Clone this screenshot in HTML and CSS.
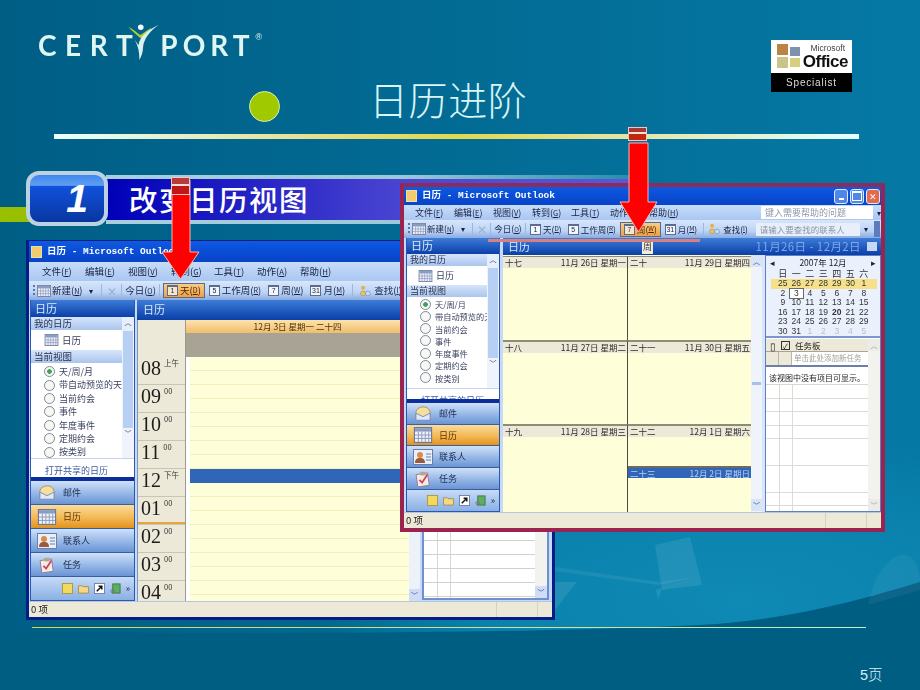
FILE: index.html
```html
<!DOCTYPE html>
<html lang="zh-CN">
<head>
<meta charset="utf-8">
<title>日历进阶</title>
<link rel="stylesheet" href="styles.css">
</head>
<body>
<svg class="sprite" width="0" height="0" aria-hidden="true">
  <symbol id="i-cal" viewBox="0 0 16 14"><rect x=".5" y=".5" width="15" height="13" fill="#eef2fb" stroke="#6a7a9c"/><rect x="1" y="1" width="14" height="3" fill="#8a9cc4"/><path d="M1 7h14M1 10h14M4 4v9M7 4v9M10 4v9M13 4v9" stroke="#8b98b8" stroke-width=".8"/></symbol>
  <symbol id="i-mail" viewBox="0 0 20 18"><path d="M2 7C3 2 8 1 11 1s6 2 7 6v8H2z" fill="#f6df9c" stroke="#a98d4c"/><path d="M2 8l8 4 8-4v8H2z" fill="#dfe8f8" stroke="#7288b4"/></symbol>
  <symbol id="i-contact" viewBox="0 0 20 16"><rect x=".5" y=".5" width="19" height="15" fill="#eaf0fb" stroke="#6c7ea8"/><circle cx="7" cy="6" r="3" fill="#d98c4a"/><path d="M2 14c0-4 2-5 5-5s5 1 5 5z" fill="#a0583a"/><path d="M13 5h5M13 8h5M13 11h5" stroke="#6c7ea8"/></symbol>
  <symbol id="i-task" viewBox="0 0 18 18"><rect x="2" y="3" width="13" height="14" fill="#f5eee0" stroke="#8a7a9c" transform="rotate(-8 9 9)"/><rect x="6" y="1" width="6" height="4" fill="#b0a78e"/><path d="M5 10l3 3 6-9" fill="none" stroke="#d0406a" stroke-width="2"/></symbol>
  <symbol id="i-find" viewBox="0 0 16 14"><circle cx="5" cy="3" r="2.5" fill="#e7b040"/><circle cx="5" cy="10" r="3" fill="#e8c468" stroke="#b08a30" stroke-width=".7"/><circle cx="11" cy="10" r="3" fill="#c5d9f5" stroke="#6a7fb0" stroke-width=".7"/></symbol>
  <symbol id="i-note" viewBox="0 0 12 12"><rect x=".5" y=".5" width="11" height="11" fill="#f4d860" stroke="#a89840"/></symbol>
  <symbol id="i-folder" viewBox="0 0 12 12"><path d="M.5 3h4l1 1h6v7H.5z" fill="#f2d888" stroke="#a88f40"/></symbol>
  <symbol id="i-link" viewBox="0 0 12 12"><rect x=".5" y=".5" width="11" height="11" fill="#fff" stroke="#6a7fb0"/><path d="M3 9l5-5M5 3.5h3.5V7" stroke="#111" stroke-width="1.6" fill="none"/></symbol>
  <symbol id="i-shelf" viewBox="0 0 12 12"><rect x="3" y="1" width="8" height="10" fill="#5dae62" stroke="#3c7a44"/><circle cx="3" cy="9" r="2" fill="none" stroke="#777"/></symbol>
</svg>

<main class="slide">
  <svg class="backdrop" viewBox="0 0 920 690" preserveAspectRatio="none" aria-hidden="true">
    <defs>
      <linearGradient id="sky" x1="0" x2="1" y1="0" y2="0"><stop offset="0" stop-color="#005e85"/><stop offset="1" stop-color="#0579a4"/></linearGradient>
      <radialGradient id="lit" gradientUnits="userSpaceOnUse" cx="740" cy="600" r="420" gradientTransform="translate(0 360) scale(1 .4)"><stop offset="0" stop-color="#0f8ab5"/><stop offset=".6" stop-color="#0a82ad"/><stop offset="1" stop-color="#0a82ad" stop-opacity="0"/></radialGradient>
    </defs>
    <rect width="920" height="690" fill="url(#sky)"/>
    <rect y="440" width="920" height="200" fill="url(#lit)"/>
    <path d="M0 690V632C260 634 500 634 700 625 790 620 860 600 920 582V690z" fill="#005e83"/>
    <path d="M655 545l35-8 12 48-40 5z" fill="#fff" opacity=".09"/>
    <path d="M555 567l105 15 38-5-40 8-104-14z" fill="#fff" opacity=".07"/>
    <path d="M656 590l44-12-38 10-4 12z" fill="#fff" opacity=".09"/>
    <path d="M555 582h22l-22 28z" fill="#fff" opacity=".09"/>
    <path d="M868 605c6-30 22-50 34-50s18 10 18 30v5z" fill="#fff" opacity=".05"/>
  </svg>

  <div class="brand">
    <span class="brand-word">CERT</span>
    <svg class="brand-mark" viewBox="0 0 40 40" aria-hidden="true">
      <path d="M3 4c6 3 10 7 13 9 3-2 8-6 12-8-3 5-8 9-11 12-3-3-10-8-14-13z" fill="#b6cc3a"/>
      <circle cx="16.500" cy="4.500" r="3" fill="#fff"/>
      <path d="M15 40c0-9-1-14-5-22l4 6c1-8 9-16 22-22-10 7-16 15-17 24 0 6-2 10-4 14z" fill="#d9f2ef"/>
    </svg>
    <span class="brand-word brand-port">PORT</span>
    <span class="brand-reg">®</span>
  </div>

  <div class="cert-badge">
    <div class="cert-top">
      <svg class="cert-flag" viewBox="0 0 26 26" aria-hidden="true">
        <rect x="1" y="1" width="11" height="11" fill="#b98445"/><rect x="14" y="4" width="10" height="9" fill="#7f92ad"/>
        <rect x="1" y="14" width="11" height="11" fill="#c9c48a"/><rect x="14" y="15" width="10" height="9" fill="#d8ce80"/>
      </svg>
      <div class="cert-words"><span class="cert-ms">Microsoft</span><span class="cert-of">Office</span></div>
    </div>
    <div class="cert-foot">Specialist</div>
  </div>

  <i class="bullet"></i>
  <h1 class="title">日历进阶</h1>
  <i class="rule"></i>

  <i class="green-stub"></i>
  <div class="band"><span class="band-text">改变日历视图</span></div>
  <div class="step"><span class="step-num">1</span></div>

  <!-- back window: day view -->
  <section class="win win-back">
    <header class="titlebar"><i class="app-ico"></i><span class="app-name">日历 - Microsoft Outlook</span></header>
    <nav class="menu">
      <span>文件(<u>F</u>)</span><span>编辑(<u>E</u>)</span><span>视图(<u>V</u>)</span><span>转到(<u>G</u>)</span><span>工具(<u>T</u>)</span><span>动作(<u>A</u>)</span><span>帮助(<u>H</u>)</span>
    </nav>
    <div class="toolbar">
      <i class="grip"></i>
      <svg class="tb-ico"><use href="#i-cal"/></svg><span class="tb-new">新建(<u>N</u>)</span><span class="tb-drop">▾</span><i class="sep"></i>
      <span class="tb-x">✕</span><i class="sep"></i>
      <span class="tb-today">今日(<u>O</u>)</span><i class="sep"></i>
      <span class="tb-btn on"><b class="dayico">1</b>天(<u>D</u>)</span>
      <span class="tb-btn"><b class="dayico">5</b>工作周(<u>R</u>)</span>
      <span class="tb-btn"><b class="dayico">7</b>周(<u>W</u>)</span>
      <span class="tb-btn"><b class="dayico">31</b>月(<u>M</u>)</span><i class="sep"></i>
      <span class="tb-btn"><svg class="tb-find"><use href="#i-find"/></svg>查找(<u>I</u>)</span>
    </div>
    <div class="body">
      <aside class="pane">
        <div class="pane-head">日历</div>
        <div class="pane-main">
          <div class="pane-list">
            <div class="sec">我的日历</div>
            <div class="cal-item"><svg class="cal-item-ico"><use href="#i-cal"/></svg><span>日历</span></div>
            <div class="sec">当前视图</div>
            <ul class="radios">
              <li class="on">天/周/月</li><li>带自动预览的天</li><li>当前约会</li><li>事件</li><li>年度事件</li><li>定期约会</li><li>按类别</li>
            </ul>
          </div>
          <div class="vscroll"><i class="sb-up">︿</i><i class="sb-thumb"></i><i class="sb-down">﹀</i></div>
        </div>
        <div class="share">打开共享的日历</div>
        <i class="strip"></i>
        <div class="navs">
          <div class="nav"><svg><use href="#i-mail"/></svg>邮件</div>
          <div class="nav on"><svg><use href="#i-cal"/></svg>日历</div>
          <div class="nav"><svg><use href="#i-contact"/></svg>联系人</div>
          <div class="nav"><svg><use href="#i-task"/></svg>任务</div>
          <div class="nav-tray"><svg><use href="#i-note"/></svg><svg><use href="#i-folder"/></svg><svg><use href="#i-link"/></svg><svg><use href="#i-shelf"/></svg><span>»</span></div>
        </div>
      </aside>
      <div class="day-wrap">
        <div class="cal-head"><span>日历</span></div>
        <div class="day-grid">
          <div class="hours">
            <div class="hour"><b>08</b><sup>上午</sup></div><div class="hour"><b>09</b><sup>00</sup></div>
            <div class="hour"><b>10</b><sup>00</sup></div><div class="hour"><b>11</b><sup>00</sup></div>
            <div class="hour"><b>12</b><sup>下午</sup></div><div class="hour now"><b>01</b><sup>00</sup></div>
            <div class="hour"><b>02</b><sup>00</sup></div><div class="hour"><b>03</b><sup>00</sup></div>
            <div class="hour"><b>04</b><sup>00</sup></div>
          </div>
          <div class="day">
            <div class="day-title">12月 3日 星期一 二十四</div>
            <div class="allday"></div>
            <div class="slots"><i class="sel"></i></div>
          </div>
          <div class="day-scroll"><i>﹀</i></div>
        </div>
      </div>
      <aside class="back-side">
        <div class="back-task"></div>
        <div class="side-scroll"><i>﹀</i></div>
      </aside>
    </div>
    <footer class="status"><span>0 项</span></footer>
  </section>

  <svg class="arrow arrow-left" viewBox="0 0 41 102" aria-hidden="true">
    <path class="arrow-stem" d="M12 1H30V73H39L20.500 100 2 73H12z"/>
  </svg>
  <i class="arrow-cap cap-left"></i>

  <!-- front window: week view -->
  <section class="win win-front">
    <header class="titlebar">
      <i class="app-ico"></i><span class="app-name">日历 - Microsoft Outlook</span>
      <div class="caps"><i class="cap-min"></i><i class="cap-max"></i><i class="cap-close">✕</i></div>
    </header>
    <nav class="menu">
      <span>文件(<u>F</u>)</span><span>编辑(<u>E</u>)</span><span>视图(<u>V</u>)</span><span>转到(<u>G</u>)</span><span>工具(<u>T</u>)</span><span>动作(<u>A</u>)</span><span>帮助(<u>H</u>)</span>
      <span class="help">键入需要帮助的问题</span><span class="help-drop">▾</span>
    </nav>
    <div class="toolbar">
      <i class="grip"></i>
      <svg class="tb-ico"><use href="#i-cal"/></svg><span class="tb-new">新建(<u>N</u>)</span><span class="tb-drop">▾</span><i class="sep"></i>
      <span class="tb-x">✕</span><i class="sep"></i>
      <span class="tb-today">今日(<u>O</u>)</span><i class="sep"></i>
      <span class="tb-btn"><b class="dayico">1</b>天(<u>D</u>)</span>
      <span class="tb-btn"><b class="dayico">5</b>工作周(<u>R</u>)</span>
      <span class="tb-btn on"><b class="dayico">7</b>周(<u>W</u>)</span>
      <span class="tb-btn"><b class="dayico">31</b>月(<u>M</u>)</span><i class="sep"></i>
      <span class="tb-btn"><svg class="tb-find"><use href="#i-find"/></svg>查找(<u>I</u>)</span>
      <span class="find-box">请输入要查找的联系人</span><span class="help-drop">▾</span>
      <i class="tb-end"></i>
    </div>
    <i class="pink-mark"></i>
    <div class="body">
      <aside class="pane">
        <div class="pane-head">日历</div>
        <div class="pane-main">
          <div class="pane-list">
            <div class="sec">我的日历</div>
            <div class="cal-item"><svg class="cal-item-ico"><use href="#i-cal"/></svg><span>日历</span></div>
            <div class="sec">当前视图</div>
            <ul class="radios">
              <li class="on">天/周/月</li><li>带自动预览的天</li><li>当前约会</li><li>事件</li><li>年度事件</li><li>定期约会</li><li>按类别</li>
            </ul>
          </div>
          <div class="vscroll"><i class="sb-up">︿</i><i class="sb-thumb"></i><i class="sb-down">﹀</i></div>
        </div>
        <div class="share">打开共享的日历</div>
        <i class="strip"></i>
        <div class="navs">
          <div class="nav"><svg><use href="#i-mail"/></svg>邮件</div>
          <div class="nav on"><svg><use href="#i-cal"/></svg>日历</div>
          <div class="nav"><svg><use href="#i-contact"/></svg>联系人</div>
          <div class="nav"><svg><use href="#i-task"/></svg>任务</div>
          <div class="nav-tray"><svg><use href="#i-note"/></svg><svg><use href="#i-folder"/></svg><svg><use href="#i-link"/></svg><svg><use href="#i-shelf"/></svg><span>»</span></div>
        </div>
      </aside>
      <div class="week-wrap">
        <div class="cal-head">
          <span>日历</span><span class="week-tab">周</span>
          <span class="range">11月26日 - 12月2日</span><i class="range-ico"></i>
        </div>
        <div class="week-body">
          <div class="week">
            <div class="wk-cell"><div class="wk-h"><span>十七</span><span>11月 26日 星期一</span></div></div>
            <div class="wk-cell"><div class="wk-h"><span>二十</span><span>11月 29日 星期四</span></div></div>
            <div class="wk-cell"><div class="wk-h"><span>十八</span><span>11月 27日 星期二</span></div></div>
            <div class="wk-cell"><div class="wk-h"><span>二十一</span><span>11月 30日 星期五</span></div></div>
            <div class="wk-cell"><div class="wk-h"><span>十九</span><span>11月 28日 星期三</span></div></div>
            <div class="wk-cell wk-split">
              <div class="wk-h"><span>二十二</span><span>12月 1日 星期六</span></div>
              <div class="wk-h wk-sel"><span>二十三</span><span>12月 2日 星期日</span></div>
            </div>
          </div>
          <div class="week-scroll"><i>︿</i><i class="ws-grip"></i><i>﹀</i></div>
          <div class="side">
            <div class="month">
              <div class="month-nav"><span>◂</span><span>2007年 12月</span><span>▸</span></div>
              <div class="dates">
                <b>日</b><b>一</b><b>二</b><b>三</b><b>四</b><b>五</b><b>六</b>
                <span class="hl hl-first">25</span><span class="hl">26</span><span class="hl">27</span><span class="hl">28</span><span class="hl">29</span><span class="hl">30</span><span class="hl hl-last">1</span>
                <span>2</span><span class="today">3</span><span>4</span><span>5</span><span>6</span><span>7</span><span>8</span>
                <span>9</span><span>10</span><span>11</span><span>12</span><span>13</span><span>14</span><span>15</span>
                <span>16</span><span>17</span><span>18</span><span>19</span><span class="bold">20</span><span>21</span><span>22</span>
                <span>23</span><span>24</span><span>25</span><span>26</span><span>27</span><span>28</span><span>29</span>
                <span>30</span><span>31</span><span class="dim">1</span><span class="dim">2</span><span class="dim">3</span><span class="dim">4</span><span class="dim">5</span>
              </div>
            </div>
            <div class="tasks">
              <div class="task-main">
                <div class="task-head"><span class="th-ico">▯</span><span class="th-ico th-check">✓</span><span class="th-label">任务板</span></div>
                <div class="task-add"><i></i><i></i><span>单击此处添加新任务</span></div>
                <div class="task-msg">该视图中没有项目可显示。</div>
                <div class="task-grid"></div>
              </div>
              <div class="side-scroll"><i>︿</i><i class="end">﹀</i></div>
            </div>
          </div>
        </div>
      </div>
    </div>
    <footer class="status"><span>0 项</span></footer>
  </section>

  <svg class="arrow arrow-right" viewBox="0 0 41 92" aria-hidden="true">
    <path class="arrow-stem" d="M11 1H30V60H39L20.500 90 2 60H11z"/>
  </svg>
  <i class="arrow-cap cap-right"></i>

  <i class="foot-line"></i>
  <span class="page-no">5页</span>
</main>
</body>
</html>
```

FILE: styles.css
```css
* { box-sizing: border-box; }
html, body { margin: 0; padding: 0; }
body { background: #005e85; font-family: "Noto Sans CJK SC", "Liberation Sans", sans-serif; }
i { font-style: normal; }
.sprite { position: absolute; }

.slide { position: relative; width: 920px; height: 690px; overflow: hidden; }
.backdrop { position: absolute; inset: 0; width: 920px; height: 690px; }

/* logo */
.brand { position: absolute; left: 38px; top: 30px; display: flex; align-items: center; color: #dff5f2; filter: blur(.3px); }
.brand-word { font: 700 28px/1 Lato, "Liberation Sans", sans-serif; letter-spacing: 8.6px; }
.brand-port { letter-spacing: 5px; }
.brand-mark { width: 38px; height: 37px; margin: -7px -3px 0 -16px; flex: none; }
.brand-reg { font: 400 9px/1 "Liberation Sans", sans-serif; margin: -16px 0 0 1px; }

/* certification badge */
.cert-badge { position: absolute; left: 771px; top: 40px; width: 81px; height: 52px; display: flex; flex-direction: column; filter: blur(.3px); }
.cert-top { height: 33px; background: #fff; display: flex; padding: 3px 3px 0 5px; }
.cert-flag { width: 26px; height: 26px; flex: none; }
.cert-words { display: flex; flex-direction: column; font-family: "Liberation Sans", sans-serif; color: #111; align-items: flex-end; flex: 1; }
.cert-ms { font-size: 8.5px; line-height: 10px; color: #444; margin-right: 4px; }
.cert-of { font-size: 17px; line-height: 17px; font-weight: 700; letter-spacing: -.5px; margin-right: 1px; }
.cert-foot { flex: 1; background: #000; color: #ddd; font: 10px/19px "Liberation Sans", sans-serif; letter-spacing: .8px; text-align: center; }

/* heading */
.bullet { position: absolute; left: 249px; top: 91px; width: 31px; height: 31px; border-radius: 50%; background: #a1c900; border: 1.5px solid #d8edb0; }
.title { position: absolute; left: 369px; top: 70px; margin: 0; font: 300 39px/56px "Noto Sans CJK SC", sans-serif; letter-spacing: .6px; color: #d9f5f5; white-space: nowrap; }
.rule { position: absolute; left: 54px; top: 134px; width: 805px; height: 5px; background: linear-gradient(90deg, #eaffff 0, #e3e08f 32%, #e1d84c 50%, #e5e29a 68%, #e4ffff 100%); }

/* step banner */
.green-stub { position: absolute; left: 0; top: 207px; width: 30px; height: 15px; background: #99c000; }
.band { position: absolute; left: 106px; top: 175px; width: 540px; height: 49px; border-top: 4px solid #9cc5d9; border-bottom: 4px solid #9cc5d9; border-image: linear-gradient(90deg, #a7cfdf 0, #9cc8da 55%, #1d8aa8 100%) 1; background: linear-gradient(90deg, #0000b8 0, #4a46d2 55%, #5c58da 100%); padding-left: 23px; }
.band-text { font: 500 28.5px/40px "Noto Sans CJK SC", sans-serif; color: #fff; letter-spacing: 1.5px; white-space: nowrap; }
.step { position: absolute; left: 26px; top: 171px; width: 82px; height: 55px; border-radius: 13px; border: 4px solid #bcd2e3; background: linear-gradient(180deg, #3f86ee 0, #5f9ff2 22%, #1052dc 24%, #08369f 100%); display: flex; align-items: center; justify-content: center; padding-left: 20px; }
.step-num { font: italic 700 39px/1 "Liberation Sans", sans-serif; color: #fff; }

/* windows */
.win { position: absolute; display: flex; flex-direction: column; color: #1c2236; background: #ece9d8; filter: blur(.35px); overflow: hidden; }
.win-back { left: 26px; top: 240px; width: 529px; height: 380px; border: 3px solid #071d86; border-top-width: 1px; --row: 13.4px; --fs: 9.5px; }
.win-front { left: 400px; top: 183px; width: 485px; height: 349px; border: 4px solid #9b2350; border-top-color: #8a2c5e; box-shadow: inset 0 0 0 1px #e89ab0; --row: 12.25px; --fs: 9px; }

.titlebar { height: 21px; flex: none; background: linear-gradient(180deg, #0f5ade 0, #0b4fd8 40%, #0844c6 100%); display: flex; align-items: center; padding-left: 2px; }
.app-ico { width: 11px; height: 12px; background: #f2cb6e; border: 1.500px solid #ecdfa8; margin-right: 5px; flex: none; }
.app-name { font: 700 9.5px/1 "Liberation Mono", "Noto Sans CJK SC", monospace; color: #fff; white-space: nowrap; }
.win-front .titlebar { height: 18px; }
.caps { margin-left: auto; margin-right: 1px; display: flex; gap: 2px; }
.caps i { width: 14px; height: 15px; border-radius: 3px; border: 1px solid #dfe9ff; background: #4f86ea; display: flex; align-items: center; justify-content: center; color: #fff; font-size: 9px; line-height: 1; }
.caps .cap-close { background: #e46a4a; }
.cap-min::before { content: ""; width: 5px; height: 2px; background: #fff; margin-top: 6px; }
.cap-max::before { content: ""; width: 8px; height: 7px; border: 1px solid #fff; border-top-width: 2px; }

.menu { height: 19px; flex: none; background: linear-gradient(180deg, #c7dcf9, #a9c7f2); display: flex; align-items: center; padding-left: 13px; font-size: var(--fs); line-height: 1; color: #1a2140; }
.menu > span { width: 43px; white-space: nowrap; }
.menu u { font-size: .82em; }
.win-front .menu { height: 15px; padding-left: 11px; }
.win-front .menu > span { width: 39px; }
.win-front .menu > .help { width: 112px; height: 13px; margin-left: 73px; background: #fff; color: #9098a8; padding: 2px 0 0 4px; }
.win-front .menu > .help-drop, .win-front .toolbar > .help-drop { width: auto; margin-left: 4px; font-size: 8px; }

.toolbar { height: 19px; flex: none; background: linear-gradient(180deg, #d7e6fb, #bcd4f6 60%, #8aabe0); display: flex; align-items: center; padding-left: 4px; font-size: var(--fs); line-height: 1; color: #1a2140; white-space: nowrap; }
.toolbar u { font-size: .75em; }
.win-front .toolbar { height: 18px; font-size: 8.5px; }
.grip { width: 2px; height: 12px; margin-right: 2px; flex: none; background: repeating-linear-gradient(180deg, #5d76a6 0 2px, transparent 2px 4px); }
.tb-ico { width: 14px; height: 12px; margin-right: 1px; flex: none; }
.tb-new { width: 37px; flex: none; }
.tb-drop { width: 9px; font-size: 8px; flex: none; }
.sep { width: 1px; height: 13px; background: #9db6de; margin: 0 3px; flex: none; }
.tb-x { width: 13px; color: #9eafc9; font-size: 12px; text-align: center; flex: none; }
.tb-today { width: 31px; text-align: center; flex: none; }
.win-front .tb-new { width: 34px; }
.win-front .sep { margin: 0 2px; }
.win-front .tb-today { width: 30px; }
.tb-btn { display: flex; align-items: center; height: 15px; padding: 0 3px; margin-right: 1px; flex: none; }
.tb-btn.on { background: linear-gradient(180deg, #f6cd8a, #ef9f42); border: 1px solid #5c6a85; color: #4b2606; }
.tb-btn.on .dayico { background: #f0e6d2; }
.dayico { display: inline-block; min-width: 11px; height: 11px; margin-right: 2px; background: #f2f6fd; border: 1px solid #5d6c8c; border-top-width: 2px; font: 400 7px/8px "Liberation Sans", sans-serif; text-align: center; }
.tb-find { width: 13px; height: 12px; margin-right: 2px; flex: none; }
.win-front .tb-btn { margin-right: 2px; padding: 0 2px; }
.win-front .tb-btn.on { padding: 0 3px; }
.find-box { width: 104px; height: 13px; background: #e8eefa; color: #8a93a8; padding: 2px 0 0 4px; margin-left: 4px; flex: none; }
.tb-end { width: 6px; height: 16px; margin-left: auto; margin-right: 1px; background: #5c7cc0; flex: none; }
.pink-mark { position: absolute; left: 84px; top: 52px; width: 212px; height: 3px; background: #d9807f; z-index: 3; }

.body { flex: 1; min-height: 0; display: flex; gap: 2px; padding: 0 0 0 1px; background: #c6d9f6; }
.win-front .body { padding-left: 2px; gap: 3px; }

/* navigation pane */
.pane { width: 105px; flex: none; background: #fff; display: flex; flex-direction: column; border: 1px solid #2a58b0; border-top: 0; }
.win-front .pane { width: 94px; }
.pane-head { height: 17px; flex: none; background: linear-gradient(180deg, #3d7cd8, #0a3fa8); color: #dbe8fb; font-size: 11px; line-height: 16px; padding-left: 4px; }
.win-front .pane-head { height: 16px; line-height: 15px; }
.pane-main { flex: none; height: 141px; display: flex; overflow: hidden; }
.win-front .pane-main { height: 134px; }
.pane-list { flex: 1; min-width: 0; }
.sec { height: 13px; background: linear-gradient(180deg, #d6e5fb, #aac5ed); font-size: var(--fs); line-height: 12px; padding-left: 3px; color: #2a3350; }
.win-front .sec { height: 12px; line-height: 11px; }
.cal-item { height: 20px; display: flex; align-items: center; padding-left: 13px; gap: 3px; font-size: var(--fs); color: #384160; }
.win-front .cal-item { height: 19px; padding-left: 11px; }
.cal-item-ico { width: 15px; height: 12px; flex: none; }
.radios { list-style: none; margin: 0; padding: 2px 0 0; }
.win-front .radios { padding-top: 1px; }
.radios li { height: var(--row); line-height: var(--row); display: flex; align-items: center; font-size: 9px; color: #3b4360; white-space: nowrap; padding-left: 13px; gap: 4px; }
.win-front .radios li { font-size: 8.2px; }
.radios li::before { content: ""; width: 9px; height: 9px; flex: none; border-radius: 50%; border: 1px solid #7f8a98; background: #f7f7f4; }
.radios li.on::before { background: radial-gradient(circle, #3fa05a 0 2px, #f7f7f4 2.6px); }
.vscroll { width: 12px; flex: none; display: flex; flex-direction: column; background: #eef3fc; }
.vscroll i { display: block; text-align: center; font-size: 7px; line-height: 11px; color: #334; }
.sb-up { height: 14px; background: #e6eefb; }
.sb-thumb { flex: 1; background: #b6cff3; margin: 0 1px; }
.sb-down { height: 30px; }
.share { flex: 1; min-height: 0; overflow: hidden; background: #fff; color: #3a5a9c; border-top: 1px solid #c4d4ea; font-size: 9px; line-height: 10px; padding: 7px 0 0 14px; white-space: nowrap; }
.strip { height: 4px; flex: none; background: #0a2f9a; }
.navs { flex: none; display: flex; flex-direction: column; }
.nav { height: 24px; display: flex; align-items: center; gap: 6px; padding-left: 6px; font-size: 9px; color: #1e2b50; background: linear-gradient(180deg, #d0e1f9, #8fb3e5 60%, #6b94d4); border-bottom: 1px solid #35609f; }
.nav svg { width: 20px; height: 16px; flex: none; }
.nav.on { background: linear-gradient(180deg, #fbdc9a, #f3b54f 60%, #e3921e); color: #5b3205; }
.nav-tray { height: 23px; background: linear-gradient(180deg, #c6dbf8, #8ab0e4); display: flex; align-items: center; justify-content: flex-end; gap: 5px; padding-right: 4px; font-size: 9px; }
.nav-tray svg { width: 11px; height: 11px; flex: none; }
.win-front .nav { height: 22px; }
.win-front .nav.on { height: 21px; }
.win-front .nav-tray { height: 21px; }

/* day view */
.day-wrap { width: 283px; flex: none; display: flex; flex-direction: column; }
.cal-head { height: 20px; flex: none; background: linear-gradient(180deg, #3d7cd8, #0a3fa8); color: #dbe8fb; font-size: 11px; line-height: 19px; padding-left: 6px; display: flex; }
.day-grid { flex: 1; min-height: 0; display: flex; overflow: hidden; border-left: 1px solid #7e95c4; }
.hours { width: 48px; flex: none; background: #ece9d8; padding-top: 37px; border-right: 1px solid #9a9a8e; }
.hour { height: 28px; display: flex; padding-left: 3px; color: #1c1c1c; border-bottom: 1px solid #c8c5b3; }
.hour b { font: 400 20px/22px "Liberation Serif", serif; }
.hour sup { font-size: 7.5px; line-height: 11px; margin: 0 0 0 3px; color: #333; }
.hour.now { box-shadow: inset 0 -10px 0 -8px #e8a53c; }
.day { flex: 1; min-width: 0; display: flex; flex-direction: column; background: #fff; padding-left: 4px; }
.day-title { height: 13px; margin-left: -4px; background: linear-gradient(180deg, #fbe3ad, #f1bd6a); font-size: 8.5px; line-height: 13px; color: #4d3008; text-align: center; white-space: nowrap; }
.allday { height: 24px; margin-left: -4px; background: #a8a394; }
.slots { flex: 1; background: #fefed8 repeating-linear-gradient(180deg, #fefed8 0 13px, #f5eebd 13px 14px); }
.sel { display: block; height: 14px; margin-top: 112px; background: #3165b8; }
.day-scroll { width: 11px; flex: none; background: #edf1f9; display: flex; flex-direction: column; justify-content: flex-end; }
.day-scroll i, .side-scroll i { display: block; height: 12px; text-align: center; font-size: 7px; line-height: 12px; color: #26459a; background: #cfdcf4; }
.back-side { width: 127px; flex: none; margin-top: 21px; display: flex; background: #fff; border: 2px solid #6f8fd0; margin-bottom: 1px; }
.back-task { flex: 1; background-image: repeating-linear-gradient(180deg, transparent 0 13px, #d2d2cc 13px 14px), linear-gradient(90deg, transparent 13px, #d8d8d2 13px 14px, transparent 14px 26px, #d8d8d2 26px 27px, transparent 27px); background-position: 0 8px, 0 0; }
.side-scroll { width: 12px; flex: none; display: flex; flex-direction: column; justify-content: flex-end; background: #f2f2ee; }

/* week view */
.week-wrap { flex: 1; min-width: 0; display: flex; flex-direction: column; }
.win-front .cal-head { height: 17px; line-height: 16px; padding-left: 5px; align-items: flex-start; }
.week-tab { margin-left: 112px; width: 11px; height: 14px; margin-top: 2px; background: #f0ede0; color: #333; font-size: 9px; line-height: 13px; text-align: center; }
.range { margin-left: auto; color: #7fa6ea; font-size: 11.5px; letter-spacing: .4px; white-space: nowrap; }
.range-ico { width: 10px; height: 9px; margin: 4px 4px 0 6px; background: #c9d7f2; }
.week-body { flex: 1; min-height: 0; display: flex; background: #d9e5f8; }
.week { width: 248px; flex: none; display: grid; grid-template-columns: 124px 124px; grid-template-rows: 84px 84px 1fr; background: #fefed8; padding-top: 1px; }
.wk-cell { border-top: 2px solid #8f8c76; border-left: 1px solid #4c4c42; min-width: 0; }
.wk-cell:nth-child(odd) { border-left: 0; }
.wk-cell:nth-child(-n+2) { border-top-width: 1px; }
.wk-h { height: 11px; background: #ece9d8; display: flex; justify-content: space-between; font-size: 8.5px; line-height: 11px; padding: 0 1px 0 2px; color: #2c2c2c; white-space: nowrap; }
.wk-split { display: flex; flex-direction: column; gap: 29px; }
.wk-h.wk-sel { background: #3165b8; color: #b9d0f3; border-top: 2px solid #6e6c5c; height: 12px; line-height: 10px; }
.week-scroll { width: 11px; flex: none; display: flex; flex-direction: column; justify-content: space-between; background: #eff3fb; text-align: center; font-size: 7px; line-height: 12px; color: #26459a; padding-bottom: 1px; }
.ws-grip { height: 3px; margin: 0 1px; background: #a9c1ea; }
.week-scroll i:not(.ws-grip) { height: 12px; display: block; background: #d8e3f6; }
.side { flex: 1; min-width: 0; margin-left: 3px; display: flex; flex-direction: column; border: 1px solid #5f7fc4; background: #fff; }
.month { height: 82px; flex: none; background: #eaf1fc; padding: 0 2px; border-bottom: 2px solid #7a97d2; }
.month-nav { display: flex; justify-content: space-between; padding: 1px 2px 0; font-size: 8.5px; line-height: 11px; color: #223; }
.dates { display: grid; grid-template-columns: repeat(7, 13.5px); grid-template-rows: 11px; grid-auto-rows: 9.5px; padding-left: 8px; font: 8.5px/9.5px "Liberation Sans", sans-serif; color: #333; text-align: center; }
.dates b { font-weight: 400; font-family: "Noto Sans CJK SC", sans-serif; font-size: 9px; line-height: 11px; }
.dates .hl { background: #f6e08a; }
.dates .hl-first { margin-left: -5px; padding-left: 5px; }
.dates .hl-last { margin-right: -6px; padding-right: 6px; }
.dates .today { outline: 1px solid #6a6a6a; background: #fff; }
.dates .bold { font-weight: 700; }
.dates .dim { color: #b8c0d0; }
.tasks { flex: 1; min-height: 0; display: flex; margin-top: 1px; }
.task-main { flex: 1; min-width: 0; display: flex; flex-direction: column; }
.task-head { height: 13px; flex: none; background: #ece9d8; display: flex; align-items: center; font-size: 8.5px; color: #222; border-bottom: 1px solid #a8a594; }
.th-ico { width: 13px; text-align: center; line-height: 11px; font-size: 10px; }
.th-check { border: 1px solid #333; width: 9px; height: 9px; margin: 0 2px; font-size: 7px; line-height: 8px; }
.th-label { margin-left: 3px; }
.task-add { height: 15px; flex: none; display: flex; background: #ece9d8; border-bottom: 2px solid #6b7fa8; font-size: 7.5px; line-height: 12px; color: #a0a09a; white-space: nowrap; overflow: hidden; }
.task-add i { width: 13px; flex: none; border-right: 1px solid #bbb8a8; }
.task-add span { background: #fff; flex: 1; padding-left: 2px; }
.task-msg { height: 18px; flex: none; padding: 6px 0 0 3px; font-size: 8px; line-height: 10px; color: #1c1c1c; border-bottom: 1px solid #d8d8d2; white-space: nowrap; }
.task-grid { flex: 1; min-height: 0; background-image: repeating-linear-gradient(180deg, transparent 0 12.5px, #dcdcd6 12.5px 13.5px), linear-gradient(90deg, transparent 13px, #dcdcd6 13px 14px, transparent 14px 26px, #dcdcd6 26px 27px, transparent 27px); }
.side-scroll .end { margin-top: auto; }
.tasks .side-scroll { justify-content: space-between; }
.tasks .side-scroll i { color: #999; background: #ecece6; }

.status { height: 16px; flex: none; background: #ece9d8; font-size: 9.5px; line-height: 15px; padding-left: 2px; color: #222; border-top: 1px solid #b8c6dd; display: flex; justify-content: space-between; }
.status::after { content: ""; width: 55px; border-left: 1px solid #d6d2c0; background: linear-gradient(90deg, transparent 40px, #d6d2c0 40px 41px, transparent 41px); }

/* red arrows */
.arrow { position: absolute; z-index: 5; }
.arrow-stem { fill: #f00; stroke: #f3b7ae; stroke-width: 1; }
.arrow-left { left: 159.500px; top: 179px; width: 41px; height: 102px; }
.arrow-right { left: 617.500px; top: 142px; width: 41px; height: 92px; }
.arrow-cap { position: absolute; width: 19px; z-index: 6; border: 1px solid #f1c7c0; background: linear-gradient(180deg, #b93a3a 0 35%, #eae0d8 35% 50%, #c01818 50%); }
.cap-left { left: 171px; top: 177px; height: 18px; }
.cap-right { left: 628px; top: 127px; height: 14px; background: linear-gradient(180deg, #a83838 0 30%, #e9e6c6 30% 48%, #c4260f 48%); }

/* footer */
.foot-line { position: absolute; left: 32px; top: 627px; width: 834px; height: 1px; background: linear-gradient(90deg, #d8d84a 0, #cfe08a 50%, #bdf0c8 100%); }
.page-no { position: absolute; left: 860px; top: 665px; font: 300 14.5px/20px "Liberation Sans", "Noto Sans CJK SC", sans-serif; color: #d8eff6; }
```
